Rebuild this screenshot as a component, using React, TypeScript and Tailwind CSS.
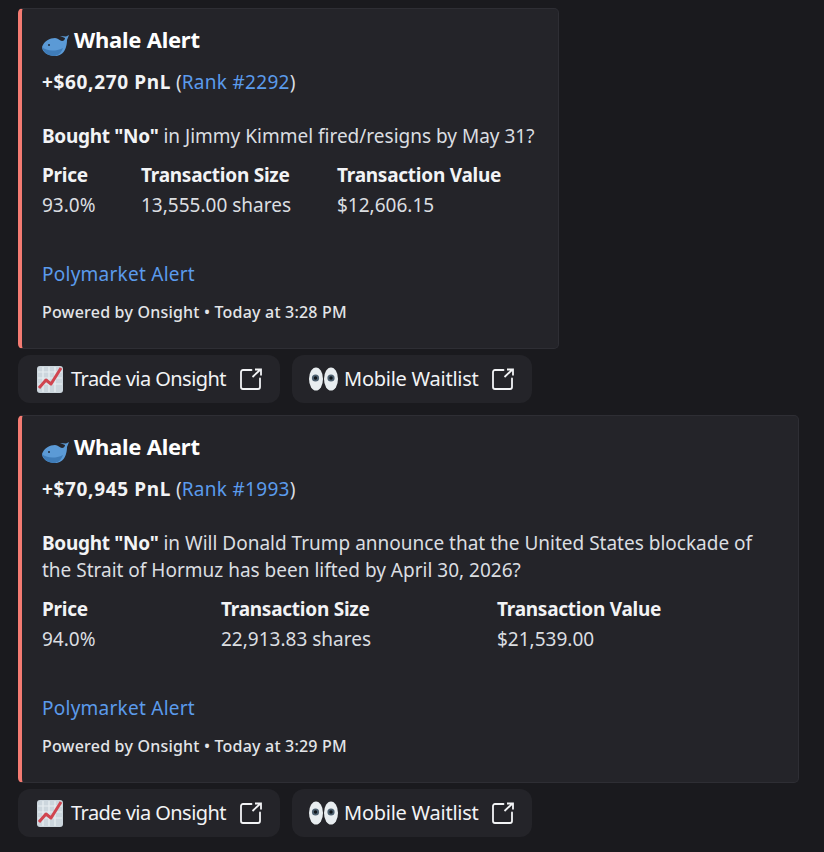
function WhaleIcon() {
  return (
    <svg width="29" height="24" viewBox="0 0 29 24" className="shrink-0 translate-y-[5px] -translate-x-[1px]">
      <path d="M1 15C3 9 9 6 14 6c3 0 5 3 7 3 2 0 3-2 3-3l-5-2 6 .5L28 3l-2 5c0 6-2 16-12 16C7 24 1 20 1 15z" fill="#5b9ad6" />
      <path d="M1 15c4 4 13 5 21 1-2 6-6 8-9 8C7 24 2 20 1 15z" fill="#3f7cb8" />
      <circle cx="8" cy="13" r="1" fill="#1f2a38" />
    </svg>
  );
}

function ChartIcon() {
  return (
    <svg width="26" height="27" viewBox="0 0 26 27" className="shrink-0 translate-x-[1px]">
      <rect x="0" y="0" width="26" height="27" rx="3" fill="#ccd6dd" />
      <path d="M6 1v25M12 1v25M18 1v25M1 6h24M1 12h24M1 18h24" stroke="#e8eef2" strokeWidth="1.2" />
      <path d="M2 22l7-8 5 4 10-16" fill="none" stroke="#d0454f" strokeWidth="3" strokeLinejoin="round" />
    </svg>
  );
}

function EyesIcon() {
  return (
    <svg width="29" height="24" viewBox="0 0 29 24" className="shrink-0 -translate-x-[1px]">
      <ellipse cx="7" cy="12" rx="7" ry="11.5" fill="#e8edf0" />
      <ellipse cx="22" cy="12" rx="7" ry="11.5" fill="#e8edf0" />
      <circle cx="6.5" cy="11" r="3.6" fill="#4d6070" />
      <circle cx="22" cy="11" r="3.6" fill="#4d6070" />
      <circle cx="6.5" cy="11" r="1.7" fill="#10151a" />
      <circle cx="22" cy="11" r="1.7" fill="#10151a" />
    </svg>
  );
}

// open box with the arrow leaving the top right corner
function LaunchIcon() {
  return (
    <svg width="22" height="22" viewBox="0 0 22 22" fill="none" stroke="#f2f3f5" strokeWidth="1.8" className="shrink-0">
      <path d="M11.5 2H3a2 2 0 0 0-2 2v15a2 2 0 0 0 2 2h15a2 2 0 0 0 2-2v-8.5" strokeLinecap="round" />
      <path d="M12.5 9l8-7.5M15 1.5h6v6" />
    </svg>
  );
}

function Field({ label, value }: { label: string; value: string }) {
  return (
    <div>
      <div className="h-[22px] leading-[22px] font-bold text-[#f2f3f5] text-[19px] tracking-[-0.25px]">{label}</div>
      <div className="h-[22px] leading-[22px] mt-2 text-[#dbdee1] text-[19px]">{value}</div>
    </div>
  );
}

function ActionButton({ icon, label, widthClass, textClass }: { icon: React.ReactNode; label: string; widthClass: string; textClass: string }) {
  return (
    <div className={`${widthClass} h-12 flex items-center pl-[18px] gap-[7px] rounded-xl bg-[#242429] text-[#f2f3f5] text-[20px]`}>
      {icon}
      <span className={textClass}>{label}</span>
      <span className="ml-auto mr-[18px]"><LaunchIcon /></span>
    </div>
  );
}

interface Alert {
  pnl: string;
  rank: string;
  question: string;
  price: string;
  size: string;
  total: string;
  time: string;
}

function AlertBlock({ alert, widthClass, colsClass }: { alert: Alert; widthClass: string; colsClass: string }) {
  return (
    <div>
      <div className={`${widthClass} rounded-[5px] border border-[#2e2e34] border-l-4 border-l-[#f47b72] bg-[#242429] pl-5 pr-5 pt-[18px] pb-[26px]`}>
        <div className="flex items-center h-6 text-[22px] font-bold text-white tracking-[-0.25px]">
          <WhaleIcon />
          <span className="ml-[3px]">Whale Alert</span>
        </div>
        <div className="mt-[20px] h-[22px] leading-[22px] text-[19px] text-[#dbdee1]">
          <b className="text-[#f2f3f5] tracking-[0.65px]">+${alert.pnl} PnL</b> (<span className="text-[#5b9bec] tracking-[0.3px]">Rank #{alert.rank}</span>)
        </div>
        <p className="mt-[30px] leading-[27px] text-[19px] text-[#dbdee1]">
          <b className="text-[#f2f3f5] tracking-[-0.3px]">Bought "No"</b> in {alert.question}
        </p>
        <div className={`mt-[14px] grid ${colsClass}`}>
          <Field label="Price" value={alert.price} />
          <Field label="Transaction Size" value={alert.size} />
          <Field label="Transaction Value" value={alert.total} />
        </div>
        <div className="mt-[47px] h-[22px] leading-[22px] text-[19px] text-[#5b9bec] tracking-[0.25px]">Polymarket Alert</div>
        <div className="mt-[17px] h-[20px] leading-[20px] text-[16px] font-medium text-[#e3e5e8] tracking-[0.2px]">
          Powered by Onsight • Today at {alert.time}
        </div>
      </div>
      <div className="mt-[6px] flex gap-3">
        <ActionButton widthClass="w-[262px]" textClass="tracking-[-0.55px] ml-[2px]" icon={<ChartIcon />} label="Trade via Onsight" />
        <ActionButton widthClass="w-[240px]" textClass="tracking-[-0.25px] -ml-[2px]" icon={<EyesIcon />} label="Mobile Waitlist" />
      </div>
    </div>
  );
}

export default function App() {
  return (
    <div className="w-[824px] h-[852px] overflow-hidden bg-[#1a1a1e] pl-[18px] pt-2 font-['Noto_Sans','Open_Sans',sans-serif]">
      <AlertBlock
        widthClass="w-[541px]"
        colsClass="grid-cols-[99px_196px_1fr]"
        alert={{
          pnl: '60,270',
          rank: '2292',
          question: 'Jimmy Kimmel fired/resigns by May 31?',
          price: '93.0%',
          size: '13,555.00 shares',
          total: '$12,606.15',
          time: '3:28 PM',
        }}
      />
      <div className="mt-3">
        <AlertBlock
          widthClass="w-[781px]"
          colsClass="grid-cols-[179px_276px_1fr]"
          alert={{
            pnl: '70,945',
            rank: '1993',
            question: 'Will Donald Trump announce that the United States blockade of the Strait of Hormuz has been lifted by April 30, 2026?',
            price: '94.0%',
            size: '22,913.83 shares',
            total: '$21,539.00',
            time: '3:29 PM',
          }}
        />
      </div>
    </div>
  );
}
